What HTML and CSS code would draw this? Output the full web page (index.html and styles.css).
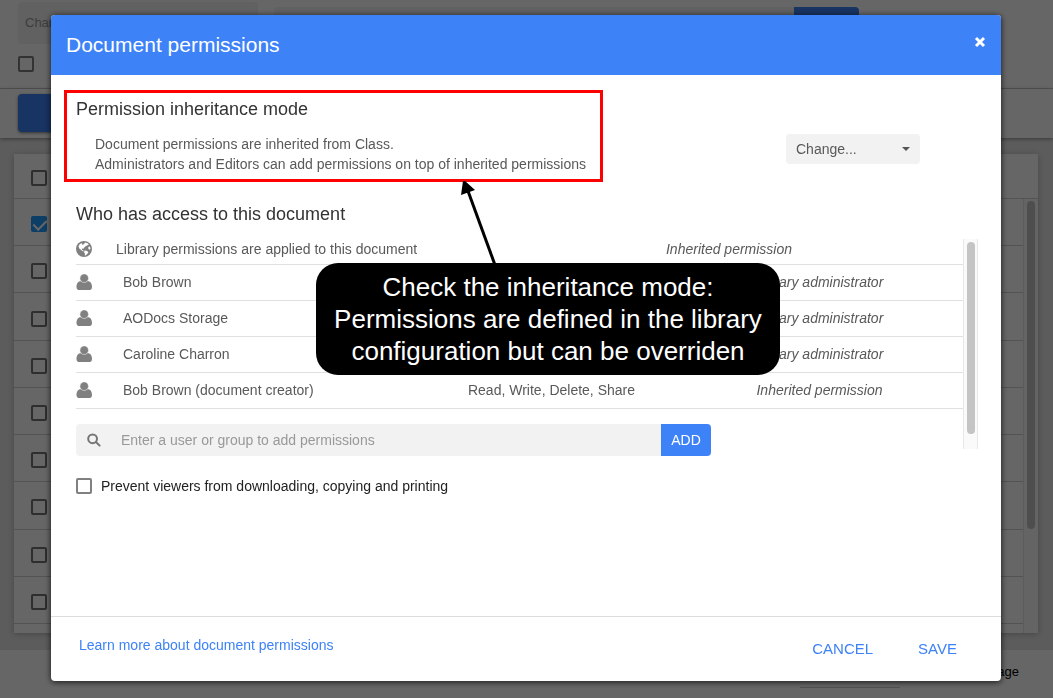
FILE: index.html
```html
<!DOCTYPE html>
<html lang="en">
<head>
  <title>Document permissions</title>
  <meta charset="UTF-8">
  <link rel="stylesheet" href="styles.css">
</head>
<body>
  <svg class="symbols" aria-hidden="true">
    <symbol id="user" viewBox="0 0 16 16">
      <path d="M4.500 7.200C2 7.200.5 9.500.5 13c0 2 1.200 3.200 3 3.200h9.500c1.800 0 3-1.200 3-3.200 0-3.500-1.500-5.800-4-5.800z"/>
      <circle cx="8.200" cy="4.200" r="4.300" stroke="#fff" stroke-width=".5"/>
    </symbol>
    <symbol id="globe" viewBox="0 0 16 16">
      <circle cx="8" cy="8" r="8"/>
      <path fill="#fff" d="M9 1.600l2.600.7 1.300 1.300-1.200.3-.8.9-1.300.2-.5 1-1.300.7-.2 1.100-1.200-.2-.8.7.8.7 1 .5.300.9-1.300-.4-1.600-1.200L3.300 7.500 2.500 5.300l1-1.800 1.600-1.300 1.100.4-.4.9.9.3 1.300-.8zM8.500 9.600l2 .1 1.900 1.300-.8 1.600-1.600 1.600-1.200.4.2-1.800-.9-1.400zM12.300 6l1.500-.4.700 1.800-.6 1.300-1.500-.8z"/>
    </symbol>
    <symbol id="search" viewBox="0 0 14 14">
      <path fill="none" stroke="currentColor" stroke-width="2" stroke-linecap="round" d="M9 9l3.600 3.600M10 5.800a4.400 4.400 0 1 1-8.800 0 4.400 4.400 0 0 1 8.800 0z"/>
    </symbol>
  </svg>

  <div class="page">
    <div class="filters">
      <input class="filter-name" type="text" placeholder="Change" aria-label="Filter">
      <div class="filter-search">
        <input type="text" aria-label="Search">
        <button type="button" aria-label="Search"></button>
      </div>
      <input class="check filter-check" type="checkbox" aria-label="Option">
    </div>
    <div class="toolbar"><button type="button" aria-label="New"></button></div>
    <div class="content">
      <div class="card">
        <div class="card-head"><input class="check" type="checkbox" aria-label="Select all"></div>
        <div class="card-list">
          <div class="card-rows">
            <div class="card-row"><input class="check" type="checkbox" aria-label="Select 1" checked></div>
            <div class="card-row"><input class="check" type="checkbox" aria-label="Select 2"></div>
            <div class="card-row"><input class="check" type="checkbox" aria-label="Select 3"></div>
            <div class="card-row"><input class="check" type="checkbox" aria-label="Select 4"></div>
            <div class="card-row"><input class="check" type="checkbox" aria-label="Select 5"></div>
            <div class="card-row"><input class="check" type="checkbox" aria-label="Select 6"></div>
            <div class="card-row"><input class="check" type="checkbox" aria-label="Select 7"></div>
            <div class="card-row"><input class="check" type="checkbox" aria-label="Select 8"></div>
            <div class="card-row"><input class="check" type="checkbox" aria-label="Select 9"></div>
          </div>
          <div class="card-track"><div class="card-thumb"></div></div>
        </div>
      </div>
    </div>
    <div class="pager"><hr><span>page</span></div>
  </div>

  <div class="overlay">
    <div class="modal" role="dialog" aria-labelledby="title">
      <div class="modal-header">
        <h1 id="title">Document permissions</h1>
        <button class="close" type="button" aria-label="Close">
          <svg viewBox="0 0 12 12"><path d="M2 2l8 8M10 2l-8 8"/></svg>
        </button>
      </div>

      <div class="modal-body">
        <h2>Permission inheritance mode</h2>
        <div class="mode">
          <p>Document permissions are inherited from Class.<br>Administrators and Editors can add permissions on top of inherited permissions</p>
          <div class="select">
            <select aria-label="Inheritance mode">
              <option>Change...</option>
            </select>
          </div>
        </div>

        <h2>Who has access to this document</h2>
        <div class="access">
          <div>
            <div class="library">
              <svg class="icon"><use href="#globe"/></svg>
              <span>Library permissions are applied to this document</span>
              <em>Inherited permission</em>
            </div>
            <table class="users">
              <tr>
                <td class="user-icon"><svg class="icon"><use href="#user"/></svg></td>
                <td class="user-name">Bob Brown</td>
                <td class="user-rights"></td>
                <td class="user-source">Library administrator</td>
              </tr>
              <tr>
                <td><svg class="icon"><use href="#user"/></svg></td>
                <td class="user-name">AODocs Storage</td>
                <td></td>
                <td class="user-source">Library administrator</td>
              </tr>
              <tr>
                <td><svg class="icon"><use href="#user"/></svg></td>
                <td class="user-name">Caroline Charron</td>
                <td></td>
                <td class="user-source">Library administrator</td>
              </tr>
              <tr>
                <td><svg class="icon"><use href="#user"/></svg></td>
                <td class="user-name">Bob Brown (document creator)</td>
                <td>Read, Write, Delete, Share</td>
                <td class="user-source">Inherited permission</td>
              </tr>
            </table>
            <div class="add">
              <label class="add-field">
                <svg><use href="#search"/></svg>
                <input type="text" placeholder="Enter a user or group to add permissions">
              </label>
              <button type="button">ADD</button>
            </div>
          </div>
          <div class="track"><div class="thumb"></div></div>
        </div>

        <label class="prevent">
          <input class="check" type="checkbox">
          Prevent viewers from downloading, copying and printing
        </label>
      </div>

      <div class="modal-footer">
        <a href="#">Learn more about document permissions</a>
        <button type="button">CANCEL</button>
        <button type="button">SAVE</button>
      </div>

      <!-- help annotations -->
      <div class="highlight"></div>
      <svg class="arrow" viewBox="0 0 46 84">
        <path d="M16 10L43 84" stroke="#000" stroke-width="3"/>
        <path d="M11 0h2l10 9-14 5z"/>
      </svg>
      <div class="callout">Check the inheritance mode:<br>Permissions are defined in the library<br>configuration but can be overriden</div>
    </div>
  </div>
</body>
</html>
```
FILE: styles.css
```css
* {
  box-sizing: border-box;
}
body {
  margin: 0;
  background: #e6e6e6;
  color: #595959;
  font-family: "Liberation Sans", Arial, Helvetica, sans-serif;
  font-size: 14px;
  line-height: 20px;
}
button, input, select {
  border: 0;
  border-radius: 0;
  margin: 0;
  padding: 0;
  font: inherit;
  color: inherit;
}
input::placeholder {
  color: #999;
}
h1, h2, p {
  margin: 0;
  font-weight: 400;
}
.symbols {
  display: none;
}
.check {
  appearance: none;
  flex: none;
  width: 16px;
  height: 16px;
  border: 2px solid #808080;
  border-radius: 2px;
  background: transparent;
}

/* page behind the dialog */
.page {
  display: flex;
  flex-direction: column;
  height: 100vh;
  overflow: hidden;
}
.filters {
  display: grid;
  grid-template-columns: 240px 585px;
  grid-template-rows: 42px 16px;
  gap: 12px 16px;
  flex: none;
  height: 89px;
  padding: 2px 18px 0;
  background: #fff;
  border-bottom: 1px solid #d0d0d0;
}
.filter-name {
  padding: 0 7px;
  border-radius: 4px;
  background: #f2f2f2;
  font-size: 13px;
}
.filter-search {
  display: flex;
  height: 32px;
  margin-top: 5px;
}
.filter-search input {
  flex: 1;
  border-radius: 4px 0 0 4px;
  background: #f2f2f2;
}
.filter-search button {
  width: 65px;
  border-radius: 0 4px 4px 0;
  background: #3d82f7;
}
.toolbar {
  flex: none;
  height: 49px;
  padding: 5px 18px;
  background: #fff;
  box-shadow: 0 1px 4px rgba(0, 0, 0, 0.4);
}
.toolbar button {
  width: 120px;
  height: 38px;
  border-radius: 4px;
  background: #3d82f7;
  box-shadow: 0 1px 3px rgba(0, 0, 0, 0.5);
}
.content {
  display: flex;
  flex: 1;
  min-height: 0;
  padding: 16px 15px 17px 14px;
}
.card {
  display: flex;
  flex: 1;
  flex-direction: column;
  background: #fff;
  box-shadow: 0 1px 6px rgba(0, 0, 0, 0.25);
}
.card .check {
  border-color: #737373;
}
.card .check:checked {
  border: 0;
  background: #1e9bff;
}
.card .check:checked::after {
  content: "";
  display: block;
  width: 6px;
  height: 11px;
  margin: 1px 0 0 5px;
  border: solid #fff;
  border-width: 0 2px 2px 0;
  transform: rotate(45deg);
}
.card-head, .card-row {
  display: flex;
  align-items: center;
  padding: 4px 0 0 17px;
  border-bottom: 1px solid #d0d0d0;
}
.card-head {
  height: 45px;
}
.card-list {
  display: flex;
  flex: 1;
}
.card-rows {
  display: flex;
  flex: 1;
  flex-direction: column;
  padding-bottom: 9px;
}
.card-row {
  flex: 1;
}
.card-track {
  width: 15px;
  padding: 2px 3px;
  border-left: 1px solid #e6e6e6;
  background: #fafafa;
}
.card-thumb {
  width: 8px;
  height: 328px;
  border-radius: 4px;
  background: #c4c4c4;
}
.pager {
  display: flex;
  flex: none;
  justify-content: flex-end;
  height: 48px;
  padding: 12px 34px 10px;
  background: #fff;
  color: #000;
  font-size: 13px;
}
.pager hr {
  align-self: flex-end;
  width: 100px;
  margin: 0 90px 0 0;
  border: 0;
  border-top: 1px solid #ccc;
}

/* dialog */
.overlay {
  position: fixed;
  inset: 0;
  display: flex;
  padding: 15px 52px 17px 51px;
  background: rgba(0, 0, 0, 0.6);
}
.modal {
  position: relative;
  display: flex;
  flex: 1;
  flex-direction: column;
  border-radius: 4px;
  background: #fff;
  box-shadow: 0 1px 6px rgba(0, 0, 0, 0.8);
}
.modal-header {
  display: flex;
  align-items: center;
  justify-content: space-between;
  height: 60px;
  padding: 0 15px;
  border-radius: 4px 4px 0 0;
  background: #3d82f7;
  color: #fff;
}
h1 {
  font-size: 21px;
  line-height: 24px;
}
.close {
  display: flex;
  margin-bottom: 6px;
  background: none;
}
.close svg {
  width: 12px;
  height: 12px;
  stroke: #fff;
  stroke-width: 3;
}
.modal-body {
  flex: 1;
  padding: 22px 23px 0 25px;
}
h2 {
  color: #333;
  font-size: 18px;
  line-height: 24px;
}
.mode {
  display: flex;
  align-items: flex-start;
  justify-content: space-between;
  margin: 13px 58px 28px 19px;
}
.select {
  position: relative;
  width: 134px;
}
.select select {
  appearance: none;
  display: block;
  width: 100%;
  height: 30px;
  padding: 0 10px;
  border-radius: 4px;
  background: #f2f2f2;
}
.select::after {
  content: "";
  position: absolute;
  top: 13px;
  right: 10px;
  border: 4px solid transparent;
  border-top-color: #555;
  border-bottom: 0;
}
.access {
  display: flex;
  align-items: flex-start;
  margin-top: 13px;
}
.access > :first-child {
  flex: 1;
}
.icon {
  display: block;
  width: 16px;
  height: 16px;
  fill: #808080;
}
.library {
  display: grid;
  grid-template-columns: 40px 379px 1fr;
  align-items: center;
  height: 26px;
  padding-bottom: 5px;
  border-bottom: 1px solid #e0e0e0;
}
.library em {
  text-align: center;
}
.users {
  width: 100%;
  table-layout: fixed;
  border-collapse: separate;
  border-spacing: 0;
}
.users td {
  height: 36px;
  padding: 0 0 2px;
  border-bottom: 1px solid #e0e0e0;
  text-align: center;
}
.users .user-icon {
  width: 47px;
}
.users .user-name {
  width: 304px;
  text-align: left;
}
.user-rights {
  width: 249px;
}
.user-source {
  font-style: italic;
}
.add {
  display: flex;
  width: 635px;
  height: 32px;
  margin-top: 15px;
}
.add-field {
  display: flex;
  flex: 1;
  align-items: center;
  gap: 20px;
  padding-left: 11px;
  border-radius: 4px 0 0 4px;
  background: #f2f2f2;
}
.add-field svg {
  width: 14px;
  height: 14px;
  color: #757575;
}
.add-field input {
  flex: 1;
  background: none;
}
.add button {
  width: 50px;
  border-radius: 0 4px 4px 0;
  background: #3d82f7;
  color: #fff;
}
.track {
  width: 15px;
  height: 210px;
  padding: 3px;
  border: solid #e8e8e8;
  border-width: 0 1px;
  background: #fafafa;
}
.thumb {
  width: 8px;
  height: 192px;
  border-radius: 4px;
  background: #c4c4c4;
}
.prevent {
  display: flex;
  align-items: center;
  gap: 9px;
  margin-top: 20px;
  color: #222;
}
.modal-footer {
  display: flex;
  align-items: center;
  gap: 45px;
  height: 65px;
  padding: 0 44px 0 28px;
  border-top: 1px solid #dcdcdc;
}
.modal-footer a {
  margin: 0 auto 8px 0;
  color: #3d82f7;
  text-decoration: none;
}
.modal-footer button {
  background: none;
  color: #3d82f7;
  font-size: 15px;
}

/* annotations over the dialog */
.highlight {
  position: absolute;
  top: 75px;
  left: 13px;
  width: 539px;
  height: 92px;
  border: 3px solid #f00;
}
.arrow {
  position: absolute;
  top: 166px;
  left: 401px;
  width: 46px;
  height: 84px;
}
.callout {
  position: absolute;
  top: 248px;
  left: 265px;
  width: 464px;
  padding: 8px 0;
  border-radius: 22px;
  background: #000;
  color: #fff;
  font-size: 26px;
  line-height: 32px;
  text-align: center;
  white-space: nowrap;
}
```
